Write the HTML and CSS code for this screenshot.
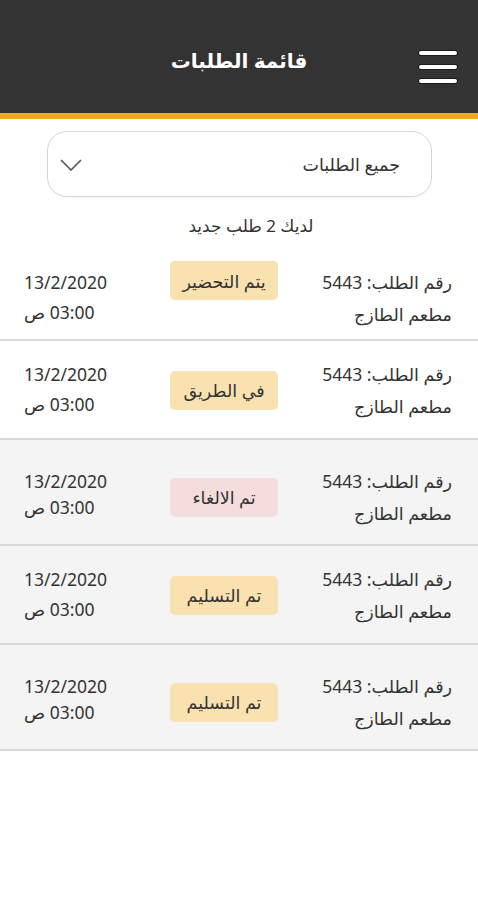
FILE: index.html
```html
<!DOCTYPE html>
<html lang="ar" dir="rtl">
<head>
<meta charset="utf-8">
<title>قائمة الطلبات</title>
<link rel="stylesheet" href="styles.css">
</head>
<body>
<header class="topbar">
  <button class="menu-btn" aria-label="menu">
    <svg width="42" height="36" viewBox="0 0 42 36">
      <g stroke="#1a1a1a" stroke-width="6" stroke-linecap="round">
        <line x1="4" y1="4" x2="38" y2="4"/>
        <line x1="4" y1="18" x2="38" y2="18"/>
        <line x1="4" y1="32" x2="38" y2="32"/>
      </g>
      <g stroke="#ffffff" stroke-width="4" stroke-linecap="round">
        <line x1="4" y1="4" x2="38" y2="4"/>
        <line x1="4" y1="18" x2="38" y2="18"/>
        <line x1="4" y1="32" x2="38" y2="32"/>
      </g>
    </svg>
  </button>
  <h1 class="topbar-title">قائمة الطلبات</h1>
</header>

<div class="filter">
  <span class="filter-label">جميع الطلبات</span>
  <svg class="filter-chevron" width="22" height="12" viewBox="0 0 22 12">
    <polyline points="1,1 11,11 21,1" fill="none" stroke="#555" stroke-width="1.6"/>
  </svg>
</div>

<p class="notice">لديك 2 طلب جديد</p>

<ul class="orders">
  <li class="order order--first">
    <div class="order-info">
      <div>رقم الطلب: 5443</div>
      <div>مطعم الطازج</div>
    </div>
    <div class="order-status"><span class="badge badge--top">يتم التحضير</span></div>
    <div class="order-date">
      <div dir="ltr">13/2/2020</div>
      <div>03:00 ص</div>
    </div>
  </li>
  <li class="order">
    <div class="order-info">
      <div>رقم الطلب: 5443</div>
      <div>مطعم الطازج</div>
    </div>
    <div class="order-status"><span class="badge">في الطريق</span></div>
    <div class="order-date">
      <div dir="ltr">13/2/2020</div>
      <div>03:00 ص</div>
    </div>
  </li>
  <li class="order order--done order--tall">
    <div class="order-info">
      <div>رقم الطلب: 5443</div>
      <div>مطعم الطازج</div>
    </div>
    <div class="order-status"><span class="badge badge--cancel">تم الالغاء</span></div>
    <div class="order-date order-date--tight">
      <div dir="ltr">13/2/2020</div>
      <div>03:00 ص</div>
    </div>
  </li>
  <li class="order order--done">
    <div class="order-info">
      <div>رقم الطلب: 5443</div>
      <div>مطعم الطازج</div>
    </div>
    <div class="order-status"><span class="badge">تم التسليم</span></div>
    <div class="order-date">
      <div dir="ltr">13/2/2020</div>
      <div>03:00 ص</div>
    </div>
  </li>
  <li class="order order--done order--tall">
    <div class="order-info">
      <div>رقم الطلب: 5443</div>
      <div>مطعم الطازج</div>
    </div>
    <div class="order-status"><span class="badge">تم التسليم</span></div>
    <div class="order-date order-date--tight">
      <div dir="ltr">13/2/2020</div>
      <div>03:00 ص</div>
    </div>
  </li>
</ul>
</body>
</html>
```

FILE: styles.css
```css
* { box-sizing: border-box; }

html, body {
  margin: 0;
  padding: 0;
  background: #ffffff;
}

body {
  font-family: "Noto Sans", "DejaVu Sans", sans-serif;
  color: #333333;
  direction: rtl;
}

.topbar {
  height: 119px;
  background: #333333;
  border-bottom: 6px solid #f2a91e;
  display: flex;
  align-items: center;
  padding: 0 19px 0 0;
  position: relative;
}

.menu-btn {
  background: none;
  border: 0;
  padding: 0;
  margin-top: 20px;
  display: flex;
}

.topbar-title {
  position: absolute;
  left: 0;
  right: 0;
  top: 44px;
  margin: 0;
  text-align: center;
  color: #ffffff;
  font-size: 20px;
  font-weight: 600;
  line-height: 34px;
  pointer-events: none;
}

.filter {
  margin: 12px 46px 0 47px;
  height: 66px;
  border: 1.5px solid #d6d6d6;
  border-radius: 20px;
  display: flex;
  align-items: center;
  justify-content: space-between;
  padding: 0 31px 0 12px;
  box-shadow: 0 1px 2px rgba(0,0,0,0.04);
}

.filter-label {
  font-size: 17.5px;
  color: #333;
}

.filter-chevron {
  display: block;
  margin-top: 2px;
}

.notice {
  margin: 16px 0 0;
  padding-left: 24px;
  text-align: center;
  font-size: 17px;
  line-height: 26px;
  color: #333;
}

.orders {
  list-style: none;
  margin: 5px 0 0;
  padding: 0;
}

.order {
  display: grid;
  grid-template-columns: 174px 108px 1fr;
  padding: 17px 26px 16px 24px;
  border-bottom: 2px solid #d9d9d9;
  background: #ffffff;
}

.order--first {
  padding-top: 22px;
  padding-bottom: 9px;
}

.order--done {
  background: #f4f4f4;
}

.order--tall {
  padding-top: 25px;
  padding-bottom: 15px;
}

.order-info {
  font-size: 17.5px;
  line-height: 32px;
  text-align: right;
}

.order-status {
  display: flex;
  align-items: center;
}

.badge {
  display: flex;
  align-items: center;
  justify-content: center;
  width: 108px;
  height: 39px;
  border-radius: 5px;
  background: #fae2b0;
  font-size: 17.5px;
  color: #333;
}

.badge--top {
  align-self: flex-start;
  margin-top: -5px;
}

.badge--cancel {
  background: #f6dddd;
}

.order-date {
  font-size: 17.5px;
  line-height: 30px;
  text-align: left;
  padding-top: 1px;
}

.order-date--tight {
  line-height: 26px;
  padding-top: 3px;
}
```
